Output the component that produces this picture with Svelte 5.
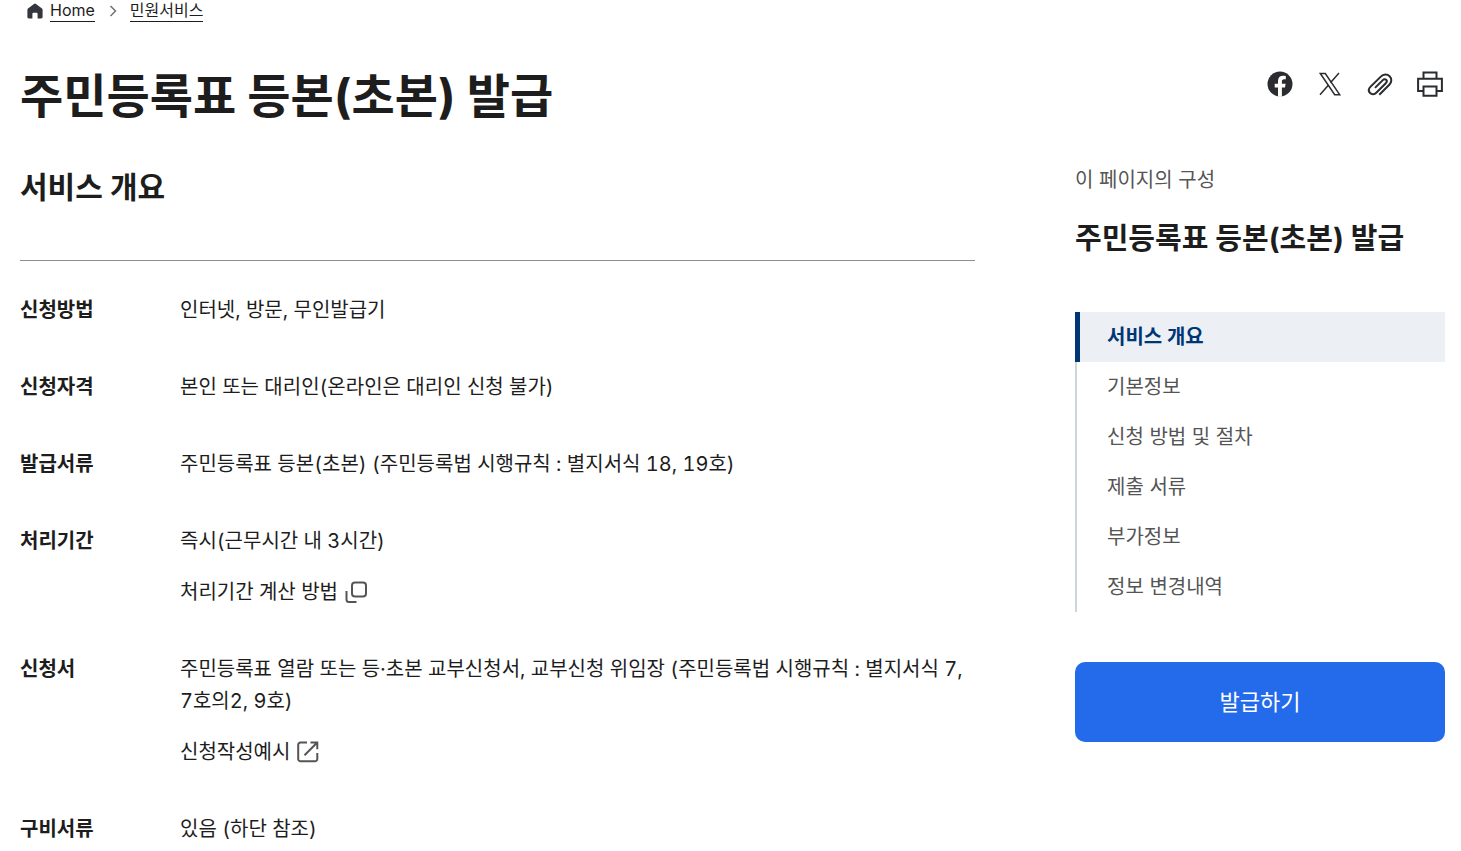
<script>
    let active = $state('overview');

    const crumbs = [
        { label: 'Home', href: '#home' },
        { label: '민원서비스', href: '#service' }
    ];

    const rows = [
        { term: '신청방법', text: '인터넷, 방문, 무인발급기' },
        { term: '신청자격', text: '본인 또는 대리인(온라인은 대리인 신청 불가)' },
        { term: '발급서류', text: '주민등록표 등본(초본) (주민등록법 시행규칙 : 별지서식 18, 19호)' },
        {
            term: '처리기간',
            text: '즉시(근무시간 내 3시간)',
            link: { label: '처리기간 계산 방법', icon: 'popup' }
        },
        {
            term: '신청서',
            text: '주민등록표 열람 또는 등·초본 교부신청서, 교부신청 위임장 (주민등록법 시행규칙 : 별지서식 7, 7호의2, 9호)',
            link: { label: '신청작성예시', icon: 'external' }
        },
        { term: '구비서류', text: '있음 (하단 참조)' }
    ];

    const sections = [
        { id: 'overview', label: '서비스 개요' },
        { id: 'basic', label: '기본정보' },
        { id: 'method', label: '신청 방법 및 절차' },
        { id: 'papers', label: '제출 서류' },
        { id: 'extra', label: '부가정보' },
        { id: 'history', label: '정보 변경내역' }
    ];
</script>

<div class="page">
    <nav class="breadcrumb" aria-label="breadcrumb">
        <svg class="home" viewBox="0 0 16 16" aria-hidden="true">
            <path d="M7 .9a1.6 1.6 0 0 1 2 0l6 4.7c.4.3.6.8.6 1.3v7.2c0 .8-.6 1.4-1.4 1.4h-3.6V11c0-.7-.5-1.2-1.2-1.2H6.6c-.7 0-1.2.5-1.2 1.2v4.5H1.8c-.8 0-1.4-.6-1.4-1.4V6.9c0-.5.2-1 .6-1.3z" />
        </svg>
        {#each crumbs as crumb, i}
            {#if i > 0}
                <svg class="chevron" viewBox="0 0 8 12" aria-hidden="true">
                    <path d="M1.5 1l5 5-5 5" />
                </svg>
            {/if}
            <a href={crumb.href}>{crumb.label}</a>
        {/each}
    </nav>

    <header>
        <h1>주민등록표 등본(초본) 발급</h1>
        <div class="share">
            <button type="button" aria-label="Facebook">
                <svg viewBox="0 0 30 30">
                    <circle cx="15" cy="15" r="12.5" fill="#2a2c2f" />
                    <path d="M13 27.8v-9.3H9.7v-3.8H13v-2.6c0-3.5 2-5.3 5-5.3 1 0 2 .1 2.8.3v3.2h-1.7c-1.7 0-2.2 1-2.2 2.1v2.3h3.7l-.6 3.800h-3.100v9.300z" fill="#fff" />
                </svg>
            </button>
            <button type="button" aria-label="X">
                <svg viewBox="0 0 30 30" class="line">
                    <path d="M5.3 4.5h5L24.7 25.7h-5z M24 4l-8.6 9.7 M13.3 16.2L5 25.7" stroke-width="1.5" />
                </svg>
            </button>
            <button type="button" aria-label="링크 복사">
                <svg viewBox="0 0 30 30" class="line">
                    <path d="M14.3 25.8l10-10c2.6-2.6 2.6-6.3.3-8.6s-6.2-2.2-8.8.4L5.6 17.6c-2.1 2.1-2.2 4.7-.5 6.4s4.3 1.6 6.4-.5l9.3-9.3c1.2-1.2 1.3-2.5.4-3.4s-2.3-.8-3.4.3l-7.8 7.8" stroke-width="2" />
                </svg>
            </button>
            <button type="button" aria-label="인쇄">
                <svg viewBox="0 0 30 30" class="line">
                    <path d="M8.5 9.7V3.4h13v6.3 M8.5 22H3.1V9.7h23.8V22h-5.4 M8.5 17.6h13v9.1h-13z" stroke-width="2" />
                </svg>
            </button>
        </div>
    </header>

    <div class="columns">
        <main>
            <h2>서비스 개요</h2>
            <dl>
                {#each rows as row}
                    <div class="row">
                        <dt>{row.term}</dt>
                        <dd>
                            <p>{row.text}</p>
                            {#if row.link}
                                <a href="#{row.link.icon}">
                                    {row.link.label}
                                    <svg viewBox="0 0 24 24" aria-hidden="true">
                                        {#if row.link.icon === 'popup'}
                                            <rect x="8" y="2.5" width="14" height="14" rx="3" />
                                            <path d="M2.5 11v8.5a2.5 2.5 0 0 0 2.5 2.5h7.5" />
                                        {:else}
                                            <path d="M11 2.5H4.5A2.3 2.3 0 0 0 2.2 4.8v14.2a2.3 2.3 0 0 0 2.3 2.3h14.5a2.3 2.3 0 0 0 2.3-2.3V13 M14.5 2.5h6.8v6.8 M21 2.8L8.5 15.3" />
                                        {/if}
                                    </svg>
                                </a>
                            {/if}
                        </dd>
                    </div>
                {/each}
            </dl>
        </main>

        <aside>
            <p class="caption">이 페이지의 구성</p>
            <h3>주민등록표 등본(초본) 발급</h3>
            <ul>
                {#each sections as section (section.id)}
                    <li class:active={active === section.id}>
                        <a href="#{section.id}" onclick={() => (active = section.id)}>{section.label}</a>
                    </li>
                {/each}
            </ul>
            <button type="button" class="issue">발급하기</button>
        </aside>
    </div>
</div>

<style>
    :global(body) {
        margin: 0;
        background: #fff;
        overflow-x: hidden;
    }

    .page {
        padding: 0 16px 0 20px;
        font-family: Inter, 'Noto Sans CJK KR', sans-serif;
        font-size: 20px;
        line-height: 32px;
        color: #1d1d1d;
    }

    h1, h2, h3, p, dl, dd, ul {
        margin: 0;
        padding: 0;
    }

    a {
        color: inherit;
        text-decoration: none;
    }

    button {
        padding: 0;
        border: none;
        background: none;
        font: inherit;
        cursor: pointer;
    }

    .breadcrumb {
        display: flex;
        align-items: center;
        height: 22px;
        padding-left: 7px;
    }

    .breadcrumb a {
        padding-bottom: 2px;
        font-size: 16px;
        line-height: 18px;
        border-bottom: 1px solid #1d1d1d;
    }

    .home {
        width: 16px;
        height: 16px;
        margin-right: 7px;
        fill: #33363d;
    }

    .chevron {
        width: 8px;
        height: 12px;
        margin: 0 13px 0 14px;
        fill: none;
        stroke: #717171;
        stroke-width: 1.5;
    }

    header {
        display: flex;
        justify-content: space-between;
        align-items: flex-start;
        margin-top: 38px;
    }

    h1 {
        font-size: 47px;
        line-height: 72px;
        font-weight: 700;
    }

    .share {
        display: flex;
        gap: 20px;
        padding-top: 9px;
    }

    .share button, .share svg {
        display: block;
        width: 30px;
        height: 30px;
    }

    .line {
        fill: none;
        stroke: #2a2c2f;
    }

    .columns {
        display: grid;
        grid-template-columns: minmax(0, 1fr) 370px;
        gap: 100px;
        align-items: start;
        margin-top: 32px;
    }

    h2, h3 {
        font-size: 30px;
        line-height: 46px;
        font-weight: 700;
    }

    dl {
        display: flex;
        flex-direction: column;
        gap: 45px;
        margin-top: 50px;
        padding: 33px 0;
        border-top: 1px solid #8e8e8e;
    }

    .row {
        display: flex;
    }

    dt {
        flex: 0 0 160px;
        font-weight: 700;
    }

    dd {
        font-variant-numeric: tabular-nums;
    }

    dd a {
        display: inline-flex;
        align-items: center;
        gap: 6px;
        margin-top: 19px;
    }

    dd svg {
        width: 24px;
        height: 24px;
        fill: none;
        stroke: #555;
        stroke-width: 2;
    }

    .caption {
        color: #555;
    }

    aside h3 {
        margin-top: 20px;
        font-size: 29px;
    }

    ul {
        list-style: none;
        margin-top: 50px;
    }

    li a {
        display: block;
        padding: 9px 0 9px 30px;
        border-left: 2px solid #cdd6de;
        color: #555;
    }

    .active a {
        padding-left: 27px;
        border-left: 5px solid #003675;
        background: #ecf0f5;
        color: #003675;
        font-weight: 700;
    }

    .issue {
        width: 100%;
        height: 80px;
        margin-top: 50px;
        border-radius: 10px;
        background: #246beb;
        color: #fff;
        font-size: 22px;
    }
</style>
